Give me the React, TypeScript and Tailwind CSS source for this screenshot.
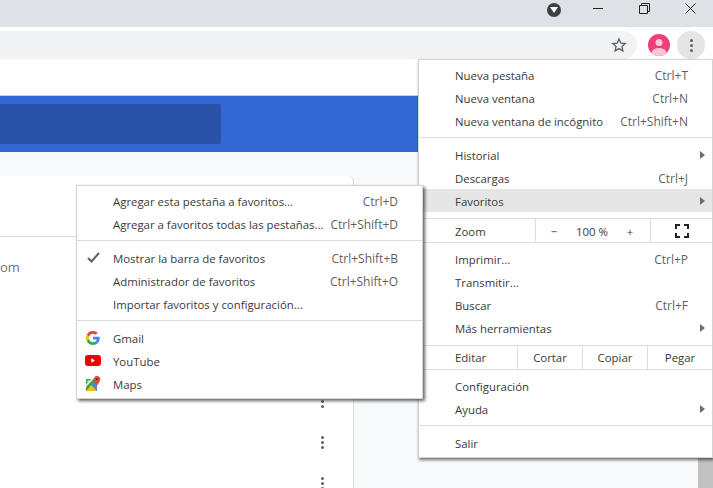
import type { ReactNode } from "react";

function Arrow() {
  return (
    <svg width="5" height="8" viewBox="0 0 5 8" className="absolute right-[7px] top-[8px]">
      <path d="M0 0 L5 4 L0 8 Z" fill="#6e6e6e" />
    </svg>
  );
}

function Row({ label, shortcut, sub, active, icon }: { label: string; shortcut?: string; sub?: boolean; active?: boolean; icon?: ReactNode }) {
  return (
    <div className={`relative flex h-[23px] items-center justify-between pl-[36px] pr-[24px] pt-[2px] ${active ? "bg-[#e6e6e6]" : ""}`}>
      {icon && <div className="absolute left-[7px] top-[3px] flex h-[17px] w-[18px] items-center justify-center">{icon}</div>}
      <span className="whitespace-nowrap text-[#3a3a3a]">{label}</span>
      {shortcut && <span className="whitespace-nowrap text-[12px] text-[#5f5f5f]">{shortcut}</span>}
      {sub && <Arrow />}
    </div>
  );
}

function Sep({ top, bottom }: { top: string; bottom: string }) {
  return <div className={`h-px bg-[#dcdcdc] ${top} ${bottom}`}></div>;
}

function Dots() {
  return (
    <div className="flex flex-col items-center gap-[2px]">
      <div className="h-[3px] w-[3px] rounded-full bg-[#5f6368]"></div>
      <div className="h-[3px] w-[3px] rounded-full bg-[#5f6368]"></div>
      <div className="h-[3px] w-[3px] rounded-full bg-[#5f6368]"></div>
    </div>
  );
}

function GoogleIcon() {
  return (
    <svg width="14" height="14" viewBox="0 0 48 48">
      <path fill="#EA4335" d="M24 9.500c3.500 0 6.700 1.300 9.100 3.500l6.800-6.800C35.800 2.400 30.300 0 24 0 14.600 0 6.500 5.400 2.600 13.200l7.900 6.100C12.400 13.600 17.700 9.500 24 9.500z" />
      <path fill="#4285F4" d="M47 24.500c0-1.600-.1-3.100-.4-4.500H24v9h12.900c-.6 3-2.200 5.500-4.700 7.200l7.700 6c4.500-4.100 7.100-10.300 7.100-17.700z" />
      <path fill="#FBBC05" d="M10.500 28.700c-.5-1.400-.8-3-.8-4.700s.3-3.200.8-4.700l-7.900-6.100C.9 16.500 0 20.100 0 24s.9 7.500 2.600 10.800l7.900-6.100z" />
      <path fill="#34A853" d="M24 48c6.500 0 11.900-2.100 15.900-5.800l-7.700-6c-2.100 1.400-4.900 2.300-8.200 2.300-6.300 0-11.600-4.100-13.500-9.800l-7.900 6.100C6.500 42.600 14.600 48 24 48z" />
    </svg>
  );
}

function YoutubeIcon() {
  return (
    <svg width="16" height="11" viewBox="0 0 16 11">
      <rect width="16" height="11" rx="3" fill="#f00000" />
      <path d="M6.300 3.300 L10 5.500 L6.300 7.700 Z" fill="#fff" />
    </svg>
  );
}

function MapsIcon() {
  return (
    <svg width="16" height="16" viewBox="0 0 16 16">
      <path d="M1 3 H12 V15 H1 Z" fill="#35a853" />
      <path d="M1 15 L6.500 9 L12 15 Z" fill="#fbbc05" />
      <path d="M6.500 9 L12 15 V9 L9 6.500 Z" fill="#4285f4" />
      <path d="M6 3 H8.500 L1 11 V8.500 Z" fill="#e8eadf" />
      <circle cx="3.500" cy="5.500" r="1.200" fill="#dbe8c8" />
      <path d="M12 0 C10 0 8.700 1.500 8.700 3.200 C8.700 5.500 12 9.500 12 9.500 C12 9.500 15.300 5.500 15.300 3.200 C15.300 1.500 14 0 12 0 Z" fill="#dd4b3e" />
      <circle cx="12" cy="3.200" r="1.100" fill="#8c2a22" />
    </svg>
  );
}

export default function App() {
  return (
    <div className="relative h-[488px] w-[713px] overflow-hidden bg-white font-['Open_Sans',sans-serif] text-[11.4px]">
      {/* Title bar */}
      <div className="flex h-[27px] items-start justify-end bg-[#dee1e6]">
        <div className="mr-[14px] mt-[3px] flex h-[14px] w-[14px] items-center justify-center rounded-full bg-[#3c4043]">
          <svg width="8" height="6" viewBox="0 0 8 6"><path d="M0 0 H8 L4 6 Z" fill="#fff" /></svg>
        </div>
        <div className="flex h-[16px] w-[46px] items-center justify-center">
          <div className="h-px w-[10px] bg-[#222]"></div>
        </div>
        <div className="flex h-[16px] w-[46px] items-center justify-center">
          <svg width="11" height="11" viewBox="0 0 11 11" fill="none" stroke="#222">
            <path d="M.5 2.500 H8.500 V10.500 H.5 Z" />
            <path d="M2.500 2.500 V.5 H10.500 V8.500 H8.500" />
          </svg>
        </div>
        <div className="flex h-[16px] w-[46px] items-center justify-center">
          <svg width="11" height="11" viewBox="0 0 11 11" stroke="#222" fill="none"><path d="M.5 .5 L10.500 10.500 M10.500 .5 L.5 10.500" /></svg>
        </div>
      </div>

      {/* Toolbar */}
      <div className="flex h-[32px] items-end bg-white">
        <div className="flex h-[28px] w-[637px] items-center justify-end rounded-r-[14px] bg-[#f1f3f4] pr-[10px]">
          <svg width="16" height="16" viewBox="0 0 24 24" fill="none" stroke="#5f6368" strokeWidth="2">
            <path d="M12 3 L14.700 9.100 L21.400 9.800 L16.400 14.200 L17.800 20.800 L12 17.400 L6.200 20.800 L7.600 14.200 L2.600 9.800 L9.300 9.100 Z" />
          </svg>
        </div>
        <div className="mb-[3px] ml-[11px] flex h-[22px] w-[22px] items-center justify-center overflow-hidden rounded-full bg-[#ee3f7c]">
          <svg width="22" height="22" viewBox="0 0 22 22">
            <circle cx="11" cy="8.500" r="3.500" fill="#fbc4d7" />
            <ellipse cx="11" cy="19" rx="7.500" ry="5" fill="#fbc4d7" />
          </svg>
        </div>
        <div className="ml-[7px] flex h-[28px] w-[28px] items-center justify-center rounded-full bg-[#e5e5e5]">
          <Dots />
        </div>
      </div>

      {/* Page */}
      <div className="h-[37px] border-b border-[#cfcfcf]"></div>
      <div className="flex h-[56px] items-center bg-[#3268d6]">
        <div className="h-[40px] w-[221px] rounded-r-[2px] bg-[#2a52a8]"></div>
      </div>
      <div className="h-[336px] bg-[#f8f9fa] pt-[24px]">
        <div className="h-[320px] w-[354px] rounded-tr-[6px] border-r border-[#d9d9d9] bg-white">
          <div className="h-[61px] border-b border-[#dcdcdc]"></div>
          <div className="flex h-[62px] items-center text-[13px] text-[#70757a]">om</div>
          <div className="mt-[82px] flex h-[41px] items-center justify-end pr-[29px]"><Dots /></div>
          <div className="flex h-[41px] items-center justify-end pr-[29px]"><Dots /></div>
          <div className="flex h-[41px] items-center justify-end pr-[29px]"><Dots /></div>
        </div>
      </div>

      {/* Scrollbar thumb */}
      <div className="absolute bottom-0 right-0 h-[30px] w-[15px] bg-[#c1c1c1]"></div>

      {/* Chrome menu */}
      <div className="absolute left-[418px] top-[59px] w-[295px] border border-[#d4d4d4] bg-white pb-[3px] pt-[3px] shadow-[1px_2px_3px_rgba(0,0,0,0.55)]">
        <Row label="Nueva pestaña" shortcut="Ctrl+T" />
        <Row label="Nueva ventana" shortcut="Ctrl+N" />
        <Row label="Nueva ventana de incógnito" shortcut="Ctrl+Shift+N" />
        <Sep top="mt-[5px]" bottom="mb-[5px]" />
        <Row label="Historial" sub />
        <Row label="Descargas" shortcut="Ctrl+J" />
        <Row label="Favoritos" sub active />
        <Sep top="mt-[6px]" bottom="mb-0" />
        <div className="flex h-[23px] items-center text-[#3a3a3a]">
          <div className="flex h-full w-[117px] items-center border-r border-[#dcdcdc] pl-[36px] pt-[2px]">Zoom</div>
          <div className="flex h-full w-[115px] items-center border-r border-[#dcdcdc] pl-[14px] pt-[2px]">
            <span className="w-[8px] text-center">−</span>
            <span className="ml-[17px] w-[34px] whitespace-nowrap text-center">100 %</span>
            <span className="ml-[17px] w-[8px] text-center">+</span>
          </div>
          <div className="flex flex-1 items-center justify-center">
            <svg width="14" height="14" viewBox="0 0 14 14" fill="none" stroke="#222" strokeWidth="2">
              <path d="M1 5 V1 H5 M9 1 H13 V5 M13 9 V13 H9 M5 13 H1 V9" />
            </svg>
          </div>
        </div>
        <Sep top="mt-0" bottom="mb-[4px]" />
        <Row label="Imprimir..." shortcut="Ctrl+P" />
        <Row label="Transmitir..." />
        <Row label="Buscar" shortcut="Ctrl+F" />
        <Row label="Más herramientas" sub />
        <Sep top="mt-[6px]" bottom="mb-0" />
        <div className="flex h-[23px] items-center text-[#3a3a3a]">
          <div className="flex h-full w-[99px] items-center border-r border-[#dcdcdc] pl-[36px]">Editar</div>
          <div className="flex h-full w-[65px] items-center justify-center border-r border-[#dcdcdc]">Cortar</div>
          <div className="flex h-full w-[65px] items-center justify-center border-r border-[#dcdcdc]">Copiar</div>
          <div className="flex h-full flex-1 items-center justify-center">Pegar</div>
        </div>
        <Sep top="mt-0" bottom="mb-[4px]" />
        <Row label="Configuración" />
        <Row label="Ayuda" sub />
        <Sep top="mt-[5px]" bottom="mb-[5px]" />
        <Row label="Salir" />
      </div>

      {/* Favoritos submenu */}
      <div className="absolute left-[76px] top-[185px] w-[347px] border border-[#d4d4d4] bg-white pb-[3px] pt-[3px] shadow-[2px_2px_3px_rgba(0,0,0,0.6)]">
        <Row label="Agregar esta pestaña a favoritos..." shortcut="Ctrl+D" />
        <Row label="Agregar a favoritos todas las pestañas..." shortcut="Ctrl+Shift+D" />
        <Sep top="mt-[5px]" bottom="mb-[5px]" />
        <Row
          label="Mostrar la barra de favoritos"
          shortcut="Ctrl+Shift+B"
          icon={
            <svg width="13" height="11" viewBox="0 0 13 11" fill="none" stroke="#5f5f5f" strokeWidth="2">
              <path d="M1 6 L4.500 9.500 L12 1" />
            </svg>
          }
        />
        <Row label="Administrador de favoritos" shortcut="Ctrl+Shift+O" />
        <Row label="Importar favoritos y configuración..." />
        <Sep top="mt-[5px]" bottom="mb-[5px]" />
        <Row label="Gmail" icon={<GoogleIcon />} />
        <Row label="YouTube" icon={<YoutubeIcon />} />
        <Row label="Maps" icon={<MapsIcon />} />
      </div>
    </div>
  );
}
